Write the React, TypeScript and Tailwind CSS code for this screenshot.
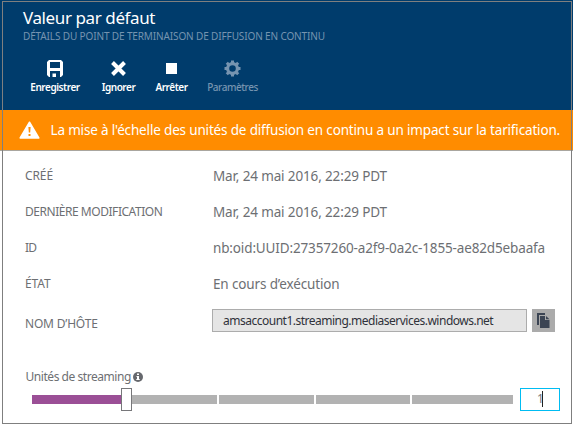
import type { ReactNode } from 'react';

function Command({ label, width, tracking, muted, children }: { label: string; width: string; tracking: string; muted?: boolean; children: ReactNode }) {
  return (
    <div className={`flex flex-col items-center ${width} ${muted ? 'text-[#7694b0]' : 'text-white'}`}>
      <div className="flex h-5 items-center justify-center">{children}</div>
      <span className={`mt-[2px] text-[10px] leading-[14px] whitespace-nowrap ${muted ? 'font-medium' : 'font-semibold'} ${tracking}`}>{label}</span>
    </div>
  );
}

function Row({ label, value, labelTracking, valueTracking }: { label: string; value: string; labelTracking: string; valueTracking: string }) {
  return (
    <div className="flex h-9 items-center whitespace-nowrap text-[#6d6f73]">
      <span className={`w-[188px] text-[12px] ${labelTracking}`}>{label}</span>
      <span className={`text-[13.5px] ${valueTracking}`}>{value}</span>
    </div>
  );
}

export default function App() {
  return (
    <div className="relative h-[425px] w-[573px] overflow-hidden bg-white font-['Noto_Sans','Open_Sans',sans-serif]">
      <header className="h-[110px] bg-[#003c6c] pt-[6px] pl-[23px]">
        <h1 className="text-[17px] leading-6 tracking-[-0.4px] whitespace-nowrap text-white">Valeur par défaut</h1>
        <p className="text-[10px] leading-[13px] tracking-[-0.13px] whitespace-nowrap text-[#7694b0]">DÉTAILS DU POINT DE TERMINAISON DE DIFFUSION EN CONTINU</p>
        <div className="mt-[15px] flex pl-[7px]">
          <Command label="Enregistrer" width="w-[50px]" tracking="tracking-[-0.45px]">
            <svg width="16" height="17" viewBox="0 0 16 17" fill="currentColor">
              <path fillRule="evenodd" d="M2 0h12l2 2v13l-2 2h-1v-6H3v6H2l-2-2V2zM3 2v6h10V2z" />
              <path d="M5.500 13.500h3.500V17H5.500z" />
            </svg>
          </Command>
          <Command label="Ignorer" width="ml-[21px] w-[35px]" tracking="tracking-[-0.45px]">
            <svg width="15" height="15" viewBox="0 0 15 15" stroke="currentColor" strokeWidth="4"><path d="M1.500 1.500l12 12M13.500 1.500l-12 12" /></svg>
          </Command>
          <Command label="Arrêter" width="ml-[19px] w-[33px]" tracking="tracking-[-0.45px]">
            <div className="h-[11px] w-[11px] bg-white" />
          </Command>
          <Command label="Paramètres" width="ml-[19px] w-[51px]" tracking="tracking-[-0.45px]" muted>
            <svg width="17" height="17" viewBox="0 0 17 17" fill="none" stroke="currentColor">
              <circle cx="8.500" cy="8.500" r="4.900" strokeWidth="3.200" />
              <path d="M8.500 .5v3M8.500 13.500v3M.5 8.500h3M13.500 8.500h3M2.800 2.800l2 2M12.200 12.200l2 2M2.800 14.200l2-2M12.200 4.800l2-2" strokeWidth="3" />
            </svg>
          </Command>
        </div>
      </header>
      <div className="flex h-[41px] items-center border-b border-[#a9a69f] bg-[#ff8c00] pl-[19px] text-white">
        <svg width="21" height="18" viewBox="0 0 21 18">
          <path d="M10.500 1.200L19.800 17H1.200z" fill="currentColor" stroke="currentColor" strokeWidth="1.500" strokeLinejoin="round" />
          <path d="M9.400 6h2.200l-.4 5.500H9.800zM9.500 13h2v2h-2z" fill="#ff8c00" />
        </svg>
        <span className="ml-[10.5px] text-[13.5px] tracking-[-0.165px] whitespace-nowrap">La mise à l'échelle des unités de diffusion en continu a un impact sur la tarification.</span>
      </div>
      <main className="pt-[7px] pl-[25px]">
        <Row label="CRÉÉ" value="Mar, 24 mai 2016, 22:29 PDT" labelTracking="tracking-[-0.1px]" valueTracking="tracking-[-0.14px]" />
        <Row label="DERNIÈRE MODIFICATION" value="Mar, 24 mai 2016, 22:29 PDT" labelTracking="tracking-[-0.46px]" valueTracking="tracking-[-0.14px]" />
        <Row label="ID" value="nb:oid:UUID:27357260-a2f9-0a2c-1855-ae82d5ebaafa" labelTracking="tracking-[-0.8px]" valueTracking="tracking-[-0.14px]" />
        <Row label="ÉTAT" value="En cours d’exécution" labelTracking="tracking-[-0.1px]" valueTracking="tracking-[-0.14px]" />
        <div className="mt-[7px] flex h-[23px] items-start">
          <span className="w-[187px] pt-[6px] text-[12px] leading-[18px] tracking-[-0.2px] whitespace-nowrap text-[#6d6f73]">NOM D’HÔTE</span>
          <div className="flex h-[23px] w-[315px] items-center border border-[#acacac] bg-[#e5e5e5] pl-[10px] text-[12px] tracking-[-0.5px] whitespace-nowrap text-[#30323a]">amsaccount1.streaming.mediaservices.windows.net</div>
          <div className="ml-[5px] flex h-[23px] w-[23px] items-center justify-center bg-[#ababab]">
            <svg width="13" height="16" viewBox="0 0 13 16" fill="#3b4453">
              <path d="M0 0h8v2H2v10H0z" />
              <path d="M3 3h5v4h4.500v8H3zM9 3l3.500 3.200H9z" />
            </svg>
          </div>
        </div>
        <div className="mt-[36px] flex h-[18px] items-center pl-[0.5px] text-[12px] tracking-[-0.45px] whitespace-nowrap text-[#6d6f73]">
          <span className="w-[107.5px]">Unités de streaming</span>
          <svg width="10" height="10" viewBox="0 0 10 10"><circle cx="5" cy="5" r="5" fill="#66686d" /><path d="M4 1.500h2v1.500H4zM3.500 4H6v3h.7v1H3.300V7H4V5h-.5z" fill="white" /></svg>
        </div>
        <div className="mt-px flex h-[24px] items-center pl-[7px]">
          <div className="h-[9px] w-[89px] bg-[#9b4f96]" />
          <div className="h-[23px] w-[11px] border border-[#77777a] bg-white" />
          <div className="h-[9px] w-[85px] bg-[#b2b2b2]" />
          <div className="ml-[2px] h-[9px] w-[95px] bg-[#b2b2b2]" />
          <div className="ml-[2px] h-[9px] w-[94px] bg-[#b2b2b2]" />
          <div className="ml-[2px] h-[9px] w-[101px] bg-[#b2b2b2]" />
          <div className="ml-[7px] flex h-[23px] w-[40px] items-center border border-[#00bcf2] pl-[16px] text-[12px] text-[#77777a]">
            <span className="w-[5px]">1</span>
            <span className="h-4 w-px bg-[#222]" />
          </div>
        </div>
      </main>
      <div className="pointer-events-none absolute top-px left-[2px] h-[423px] w-[570px] border border-[#7f7f7f]" />
    </div>
  );
}
